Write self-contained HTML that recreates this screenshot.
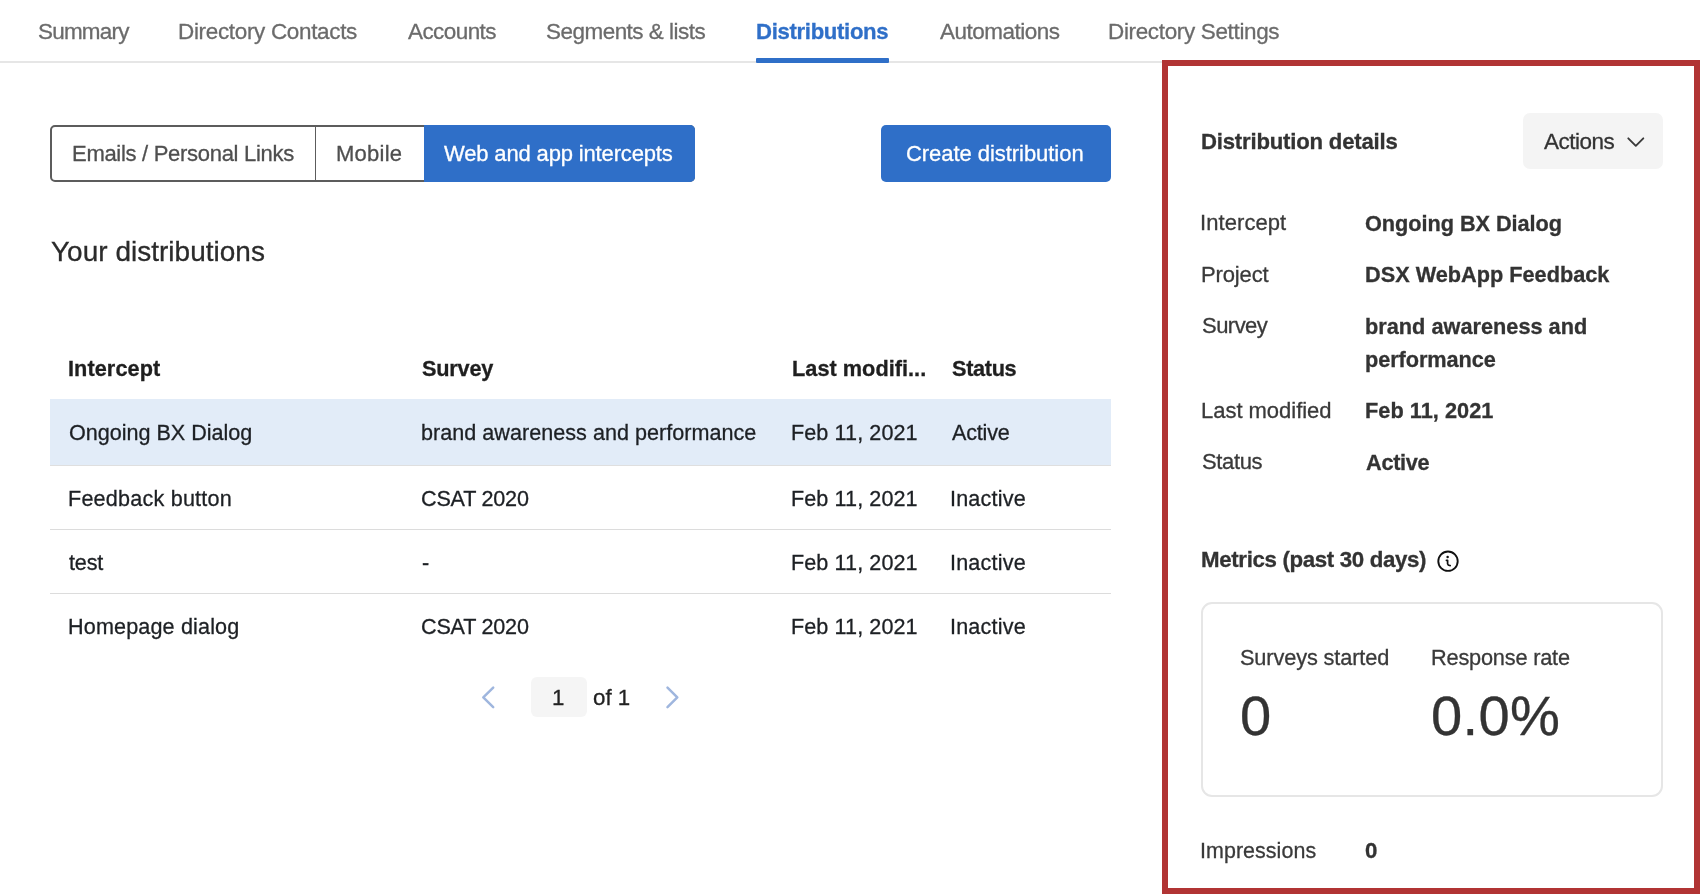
<!DOCTYPE html>
<html><head><meta charset="utf-8"><title>Distributions</title>
<style>
html,body{margin:0;padding:0;background:#ffffff;}
body{width:1700px;height:894px;overflow:hidden;position:relative;font-family:"Liberation Sans",sans-serif;}
.t{position:absolute;white-space:nowrap;line-height:1;will-change:transform;-webkit-text-stroke:0.3px currentColor;}
.s{position:absolute;box-sizing:border-box;}
</style></head><body>
<!-- nav line + active underline -->
<div class="s" style="left:0;top:61px;width:1165px;height:2px;background:#e6e6e6"></div>
<div class="s" style="left:755.5px;top:58px;width:133.5px;height:5px;background:#2f6fc8;border-radius:1px"></div>
<!-- segmented control -->
<div class="s" style="left:50px;top:125px;width:645px;height:57px;border:2px solid #5c5c5c;border-radius:5px"></div>
<div class="s" style="left:315px;top:126px;width:1.3px;height:55px;background:#5c5c5c"></div>
<div class="s" style="left:424px;top:125px;width:271px;height:57px;background:#2f6fc8;border-radius:0 5px 5px 0"></div>
<!-- create button -->
<div class="s" style="left:881px;top:125px;width:230px;height:57px;background:#2f6fc8;border-radius:5px"></div>
<!-- table -->
<div class="s" style="left:50px;top:399px;width:1061px;height:66px;background:#e2ecf8"></div>
<div class="s" style="left:50px;top:465px;width:1061px;height:1px;background:#dfdfdf"></div>
<div class="s" style="left:50px;top:529px;width:1061px;height:1px;background:#dcdcdc"></div>
<div class="s" style="left:50px;top:593px;width:1061px;height:1px;background:#dcdcdc"></div>
<!-- pagination -->
<div class="s" style="left:530.5px;top:677px;width:56.5px;height:40px;background:#f5f5f5;border-radius:6px"></div>
<svg class="s" style="left:470px;top:680px" width="220" height="36" viewBox="470 680 220 36">
  <polyline points="493.2,687.6 483.3,697.4 493.2,707.2" fill="none" stroke="#9fb6de" stroke-width="2.5" stroke-linecap="round" stroke-linejoin="round"/>
  <polyline points="667.5,687.6 677.3,697.4 667.5,707.2" fill="none" stroke="#9fb6de" stroke-width="2.5" stroke-linecap="round" stroke-linejoin="round"/>
</svg>
<!-- red frame -->
<div class="s" style="left:1162px;top:60px;width:538px;height:834px;border:6px solid #b13434"></div>
<!-- actions button -->
<div class="s" style="left:1522.5px;top:113px;width:140px;height:56px;background:#f4f4f4;border-radius:7px"></div>
<svg class="s" style="left:1620px;top:130px" width="30" height="24" viewBox="1620 130 30 24">
  <polyline points="1628.3,138.3 1635.8,145.8 1643.3,138.3" fill="none" stroke="#3a3a3a" stroke-width="1.9" stroke-linecap="round" stroke-linejoin="round"/>
</svg>
<!-- info icon -->
<svg class="s" style="left:1434px;top:547px" width="28" height="28" viewBox="1434 547 28 28">
  <circle cx="1448" cy="561.2" r="9.7" fill="none" stroke="#111" stroke-width="1.9"/>
  <circle cx="1447.6" cy="557.1" r="1.25" fill="#111"/>
  <path d="M1446.4 560.3 L1447.6 560.3 L1447.6 563.8 Q1447.9 565.5 1450.2 565.6" fill="none" stroke="#111" stroke-width="1.7" stroke-linecap="round" stroke-linejoin="round"/>
</svg>
<!-- metrics box -->
<div class="s" style="left:1201px;top:602px;width:462px;height:195px;border:2px solid #e6e6e6;border-radius:11px"></div>

<div class="t" style="left:38.00px;top:21.00px;font-size:22.46px;letter-spacing:-0.768px;font-weight:400;color:#6b6b6b">Summary</div>
<div class="t" style="left:178.00px;top:21.00px;font-size:22.46px;letter-spacing:-0.317px;font-weight:400;color:#6b6b6b">Directory Contacts</div>
<div class="t" style="left:408.00px;top:21.00px;font-size:22.46px;letter-spacing:-0.547px;font-weight:400;color:#6b6b6b">Accounts</div>
<div class="t" style="left:546.00px;top:21.00px;font-size:22.46px;letter-spacing:-0.501px;font-weight:400;color:#6b6b6b">Segments &amp; lists</div>
<div class="t" style="left:756.00px;top:21.00px;font-size:22.14px;letter-spacing:-0.318px;font-weight:700;color:#2f6fc8">Distributions</div>
<div class="t" style="left:940.00px;top:21.00px;font-size:22.46px;letter-spacing:-0.489px;font-weight:400;color:#6b6b6b">Automations</div>
<div class="t" style="left:1108.00px;top:21.00px;font-size:22.46px;letter-spacing:-0.330px;font-weight:400;color:#6b6b6b">Directory Settings</div>
<div class="t" style="left:72.00px;top:143.00px;font-size:22.03px;letter-spacing:-0.301px;font-weight:400;color:#4f4f4f">Emails / Personal Links</div>
<div class="t" style="left:336.00px;top:143.00px;font-size:22.03px;letter-spacing:0.233px;font-weight:400;color:#4f4f4f">Mobile</div>
<div class="t" style="left:444.00px;top:143.00px;font-size:22.03px;letter-spacing:-0.158px;font-weight:400;color:#ffffff">Web and app intercepts</div>
<div class="t" style="left:906.00px;top:143.00px;font-size:22.03px;letter-spacing:-0.057px;font-weight:400;color:#ffffff">Create distribution</div>
<div class="t" style="left:51.00px;top:238.00px;font-size:27.97px;letter-spacing:0.021px;font-weight:400;color:#2b2b2b">Your distributions</div>
<div class="t" style="left:68.00px;top:358.00px;font-size:21.71px;letter-spacing:0.071px;font-weight:700;color:#1f1f1f">Intercept</div>
<div class="t" style="left:422.00px;top:358.00px;font-size:21.71px;letter-spacing:-0.195px;font-weight:700;color:#1f1f1f">Survey</div>
<div class="t" style="left:792.00px;top:358.00px;font-size:21.71px;letter-spacing:0.028px;font-weight:700;color:#1f1f1f">Last modifi...</div>
<div class="t" style="left:952.00px;top:358.00px;font-size:21.71px;letter-spacing:-0.329px;font-weight:700;color:#1f1f1f">Status</div>
<div class="t" style="left:69.00px;top:422.00px;font-size:21.59px;letter-spacing:-0.018px;font-weight:400;color:#1d2024">Ongoing BX Dialog</div>
<div class="t" style="left:421.00px;top:422.00px;font-size:21.59px;letter-spacing:0.022px;font-weight:400;color:#1d2024">brand awareness and performance</div>
<div class="t" style="left:791.00px;top:422.00px;font-size:21.59px;letter-spacing:0.096px;font-weight:400;color:#1d2024">Feb 11, 2021</div>
<div class="t" style="left:952.00px;top:422.00px;font-size:21.59px;letter-spacing:-0.205px;font-weight:400;color:#1d2024">Active</div>
<div class="t" style="left:68.00px;top:488.00px;font-size:21.59px;letter-spacing:0.212px;font-weight:400;color:#1d2024">Feedback button</div>
<div class="t" style="left:421.00px;top:488.00px;font-size:21.59px;letter-spacing:-0.208px;font-weight:400;color:#1d2024">CSAT 2020</div>
<div class="t" style="left:791.00px;top:488.00px;font-size:21.59px;letter-spacing:0.096px;font-weight:400;color:#1d2024">Feb 11, 2021</div>
<div class="t" style="left:950.00px;top:488.00px;font-size:21.59px;letter-spacing:0.186px;font-weight:400;color:#1d2024">Inactive</div>
<div class="t" style="left:69.00px;top:552.00px;font-size:21.59px;letter-spacing:-0.146px;font-weight:400;color:#1d2024">test</div>
<div class="t" style="left:422.00px;top:552.00px;font-size:21.59px;letter-spacing:0.036px;font-weight:400;color:#1d2024">-</div>
<div class="t" style="left:791.00px;top:552.00px;font-size:21.59px;letter-spacing:0.096px;font-weight:400;color:#1d2024">Feb 11, 2021</div>
<div class="t" style="left:950.00px;top:552.00px;font-size:21.59px;letter-spacing:0.186px;font-weight:400;color:#1d2024">Inactive</div>
<div class="t" style="left:68.00px;top:616.00px;font-size:21.59px;letter-spacing:0.148px;font-weight:400;color:#1d2024">Homepage dialog</div>
<div class="t" style="left:421.00px;top:616.00px;font-size:21.59px;letter-spacing:-0.208px;font-weight:400;color:#1d2024">CSAT 2020</div>
<div class="t" style="left:791.00px;top:616.00px;font-size:21.59px;letter-spacing:0.096px;font-weight:400;color:#1d2024">Feb 11, 2021</div>
<div class="t" style="left:950.00px;top:616.00px;font-size:21.59px;letter-spacing:0.186px;font-weight:400;color:#1d2024">Inactive</div>
<div class="t" style="left:552.00px;top:687.00px;font-size:22.32px;letter-spacing:0.000px;font-weight:400;color:#222222">1</div>
<div class="t" style="left:593.00px;top:687.00px;font-size:22.32px;letter-spacing:-0.001px;font-weight:400;color:#222222">of 1</div>
<div class="t" style="left:1201.00px;top:131.00px;font-size:22.14px;letter-spacing:-0.189px;font-weight:700;color:#333333">Distribution details</div>
<div class="t" style="left:1544.00px;top:131.00px;font-size:22.46px;letter-spacing:-0.499px;font-weight:400;color:#333333">Actions</div>
<div class="t" style="left:1200.00px;top:212.00px;font-size:22.03px;letter-spacing:0.065px;font-weight:400;color:#3a3a3a">Intercept</div>
<div class="t" style="left:1201.00px;top:264.00px;font-size:22.03px;letter-spacing:-0.141px;font-weight:400;color:#3a3a3a">Project</div>
<div class="t" style="left:1202.00px;top:315.00px;font-size:22.03px;letter-spacing:-0.536px;font-weight:400;color:#3a3a3a">Survey</div>
<div class="t" style="left:1201.00px;top:400.00px;font-size:22.03px;letter-spacing:-0.035px;font-weight:400;color:#3a3a3a">Last modified</div>
<div class="t" style="left:1202.00px;top:451.00px;font-size:22.03px;letter-spacing:-0.382px;font-weight:400;color:#3a3a3a">Status</div>
<div class="t" style="left:1365.00px;top:213.00px;font-size:21.71px;letter-spacing:-0.040px;font-weight:700;color:#333333">Ongoing BX Dialog</div>
<div class="t" style="left:1365.00px;top:264.00px;font-size:21.71px;letter-spacing:-0.001px;font-weight:700;color:#333333">DSX WebApp Feedback</div>
<div class="t" style="left:1365.00px;top:316.00px;font-size:21.71px;letter-spacing:0.015px;font-weight:700;color:#333333">brand awareness and</div>
<div class="t" style="left:1365.00px;top:349.00px;font-size:21.71px;letter-spacing:-0.057px;font-weight:700;color:#333333">performance</div>
<div class="t" style="left:1365.00px;top:400.00px;font-size:21.71px;letter-spacing:0.037px;font-weight:700;color:#333333">Feb 11, 2021</div>
<div class="t" style="left:1366.00px;top:452.00px;font-size:21.71px;letter-spacing:-0.294px;font-weight:700;color:#333333">Active</div>
<div class="t" style="left:1201.00px;top:549.00px;font-size:22.29px;letter-spacing:-0.351px;font-weight:700;color:#333333">Metrics (past 30 days)</div>
<div class="t" style="left:1240.00px;top:647.00px;font-size:21.74px;letter-spacing:-0.124px;font-weight:400;color:#3a3a3a">Surveys started</div>
<div class="t" style="left:1431.00px;top:647.00px;font-size:21.74px;letter-spacing:-0.197px;font-weight:400;color:#3a3a3a">Response rate</div>
<div class="t" style="left:1240.00px;top:688.00px;font-size:56.14px;letter-spacing:0.000px;font-weight:400;color:#333333">0</div>
<div class="t" style="left:1431.00px;top:688.00px;font-size:56.14px;letter-spacing:0.318px;font-weight:400;color:#333333">0.0%</div>
<div class="t" style="left:1200.00px;top:841.00px;font-size:21.45px;letter-spacing:0.055px;font-weight:400;color:#3a3a3a">Impressions</div>
<div class="t" style="left:1365.00px;top:840.00px;font-size:22.29px;letter-spacing:0.000px;font-weight:700;color:#333333">0</div>
</body></html>
